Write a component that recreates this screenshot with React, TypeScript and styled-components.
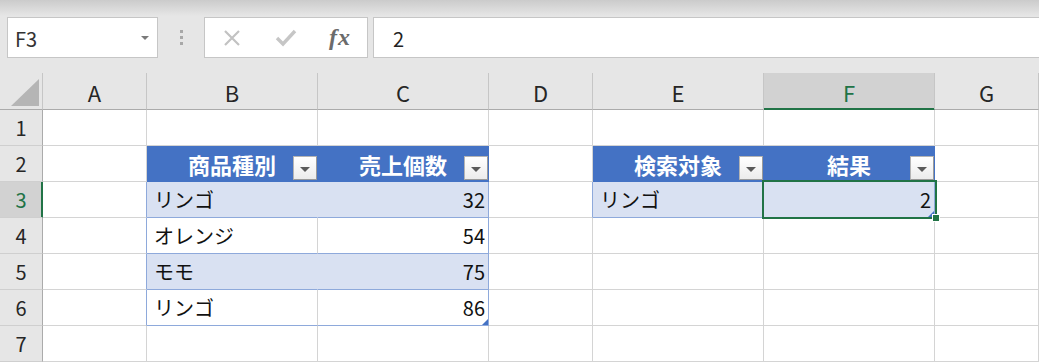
import React from "react";
import styled, { createGlobalStyle } from "styled-components";

const GRID = "#d4d4d4";
const TABLE_LINE = "#8ea9db";
const HEAD_BG = "#4472c4";
const BAND_BG = "#d9e1f2";
const EXCEL_GREEN = "#217346";

const GlobalStyle = createGlobalStyle`
  html, body {
    margin: 0;
    padding: 0;
    background: #ffffff;
  }
  body {
    font-family: "Noto Sans CJK JP", "Noto Sans", sans-serif;
    overflow: hidden;
  }
`;

const Window = styled.div`
  width: 1039px;
  height: 362px;
  overflow: hidden;
  background: #ffffff;
`;

const FormulaBar = styled.div`
  height: 73px;
  box-sizing: border-box;
  padding: 17px 0 0 7px;
  display: flex;
  align-items: flex-start;
  background: linear-gradient(to bottom, #cbcbcb 0px, #e6e6e6 16px);
`;

const NameBox = styled.div`
  box-sizing: border-box;
  width: 151px;
  height: 41px;
  background: #ffffff;
  border: 1px solid #c6c6c6;
  display: flex;
  align-items: center;
  justify-content: space-between;
  padding: 3px 8px 0 7px;
  font-size: 20px;
  line-height: 1;
  color: #333333;
`;

const DropArrow = styled.span`
  width: 0;
  height: 0;
  margin-top: -3px;
  border-left: 4px solid transparent;
  border-right: 4px solid transparent;
  border-top: 4px solid #7a7a7a;
`;

const Grip = styled.div`
  width: 46px;
  height: 41px;
  display: flex;
  flex-direction: column;
  align-items: center;
  justify-content: center;
  gap: 3px;
`;

const GripDot = styled.span`
  width: 3px;
  height: 3px;
  background: #a8a8a8;
`;

const ButtonGroup = styled.div`
  box-sizing: border-box;
  height: 41px;
  background: #ffffff;
  border: 1px solid #c6c6c6;
  display: flex;
  align-items: center;
`;

const ToolButton = styled.div`
  width: 54px;
  height: 39px;
  display: flex;
  align-items: center;
  justify-content: center;
`;

const FxLabel = styled.span`
  font-family: "Liberation Serif", "DejaVu Serif", serif;
  font-style: italic;
  font-weight: bold;
  font-size: 24px;
  color: #6b6b6b;
  letter-spacing: 1px;
`;

const FormulaInput = styled.div`
  box-sizing: border-box;
  flex: 1;
  height: 41px;
  margin-left: 5px;
  background: #ffffff;
  border: 1px solid #c6c6c6;
  border-right: none;
  display: flex;
  align-items: center;
  padding: 2px 0 0 19px;
  font-size: 20px;
  line-height: 1;
  color: #222222;
`;

const Sheet = styled.div`
  display: grid;
  grid-template-columns: 43px 104px 171px 171px 104px 171px 171px 104px;
  grid-template-rows: 37px repeat(7, 36px);
`;

const Corner = styled.div`
  box-sizing: border-box;
  background: #e6e6e6;
  border-right: 1px solid #c6c6c6;
  border-bottom: 1px solid #ababab;
  display: flex;
  align-items: flex-end;
  justify-content: flex-end;
  padding: 0 3px 3px 0;
`;

const CornerMark = styled.span`
  width: 28px;
  height: 27px;
  background: #b5b5b5;
  clip-path: polygon(100% 0, 100% 100%, 0 100%);
`;

const ColHead = styled.div<{ $selected?: boolean }>`
  box-sizing: border-box;
  background: ${(p) => (p.$selected ? "#d2d2d2" : "#e6e6e6")};
  border-right: 1px solid #c6c6c6;
  border-bottom: 1px solid ${(p) => (p.$selected ? EXCEL_GREEN : "#ababab")};
  box-shadow: ${(p) => (p.$selected ? `inset 0 -1px 0 ${EXCEL_GREEN}` : "none")};
  display: flex;
  align-items: center;
  justify-content: center;
  padding-top: 1px;
  font-size: 22px;
  line-height: 1;
  color: ${(p) => (p.$selected ? EXCEL_GREEN : "#262626")};
`;

const RowHead = styled.div<{ $selected?: boolean }>`
  box-sizing: border-box;
  background: ${(p) => (p.$selected ? "#d2d2d2" : "#e6e6e6")};
  border-right: 1px solid ${(p) => (p.$selected ? EXCEL_GREEN : "#ababab")};
  border-bottom: 1px solid #cfcfcf;
  box-shadow: ${(p) => (p.$selected ? `inset -1px 0 0 ${EXCEL_GREEN}` : "none")};
  display: flex;
  align-items: center;
  justify-content: center;
  font-size: 20px;
  line-height: 1;
  color: ${(p) => (p.$selected ? EXCEL_GREEN : "#262626")};
`;

const Cell = styled.div<{
  $bg: string;
  $right: string;
  $bottom: string;
  $head?: boolean;
  $numeric?: boolean;
}>`
  position: relative;
  box-sizing: border-box;
  background: ${(p) => p.$bg};
  border-right: 1px solid ${(p) => p.$right};
  border-bottom: 1px solid ${(p) => p.$bottom};
  display: flex;
  align-items: center;
  justify-content: ${(p) => (p.$head ? "center" : p.$numeric ? "flex-end" : "flex-start")};
  padding: ${(p) => (p.$head ? "0" : "1px 3px 0 7px")};
  font-size: ${(p) => (p.$head ? "22px" : "20px")};
  line-height: 1;
  font-weight: ${(p) => (p.$head ? 700 : 400)};
  color: ${(p) => (p.$head ? "#ffffff" : "#111111")};
  white-space: nowrap;
`;

const FilterButton = styled.span`
  position: absolute;
  right: 0;
  bottom: 1px;
  box-sizing: border-box;
  width: 24px;
  height: 24px;
  background: linear-gradient(to bottom, #ffffff, #ececec);
  border: 1px solid #b4b4b4;
  border-right-color: #9a9a9a;
  border-bottom-color: #9a9a9a;
  display: flex;
  align-items: center;
  justify-content: center;
  padding-top: 2px;
`;

const FilterArrow = styled.span`
  width: 0;
  height: 0;
  border-left: 5px solid transparent;
  border-right: 5px solid transparent;
  border-top: 5px solid #5a5a5a;
`;

const ResizeHandle = styled.span`
  position: absolute;
  right: 0;
  bottom: 0;
  width: 6px;
  height: 6px;
  background: ${HEAD_BG};
  clip-path: polygon(100% 0, 100% 100%, 0 100%);
`;

const Selection = styled.span`
  position: absolute;
  top: -2px;
  left: -2px;
  right: -3px;
  bottom: -2px;
  border: 2px solid ${EXCEL_GREEN};
  z-index: 2;
  pointer-events: none;
`;

const FillHandle = styled.span`
  position: absolute;
  right: -5px;
  bottom: -5px;
  width: 6px;
  height: 6px;
  background: ${EXCEL_GREEN};
  border: 1px solid #ffffff;
`;

const COLS = ["A", "B", "C", "D", "E", "F", "G"];
const ROWS = [1, 2, 3, 4, 5, 6, 7];

interface TableRange {
  c0: number;
  c1: number;
  r0: number;
  r1: number;
}

const TABLES: TableRange[] = [
  { c0: 1, c1: 2, r0: 2, r1: 6 },
  { c0: 4, c1: 5, r0: 2, r1: 3 },
];

const VALUES: Record<string, string | number> = {
  B2: "商品種別",
  C2: "売上個数",
  B3: "リンゴ",
  C3: 32,
  B4: "オレンジ",
  C4: 54,
  B5: "モモ",
  C5: 75,
  B6: "リンゴ",
  C6: 86,
  E2: "検索対象",
  F2: "結果",
  E3: "リンゴ",
  F3: 2,
};

const ACTIVE = { col: 5, row: 3 };

function findTable(c: number, r: number) {
  return TABLES.find((t) => c >= t.c0 && c <= t.c1 && r >= t.r0 && r <= t.r1);
}

function cellLook(c: number, r: number) {
  const t = findTable(c, r);
  if (t && r === t.r0) {
    return { bg: HEAD_BG, right: HEAD_BG, bottom: HEAD_BG, head: true, table: t };
  }
  if (t) {
    const band = (r - t.r0) % 2 === 1;
    const bg = band ? BAND_BG : "#ffffff";
    const right = c === t.c1 ? TABLE_LINE : band ? BAND_BG : GRID;
    return { bg, right, bottom: TABLE_LINE, head: false, table: t };
  }
  const next = findTable(c + 1, r);
  const right = next && next.c0 === c + 1 && r > next.r0 ? TABLE_LINE : GRID;
  return { bg: "#ffffff", right, bottom: GRID, head: false, table: undefined };
}

function XIcon() {
  return (
    <svg width="20" height="20" viewBox="0 0 20 20">
      <path d="M3 3 L17 17 M17 3 L3 17" stroke="#c2c2c2" strokeWidth="2.2" fill="none" />
    </svg>
  );
}

function CheckIcon() {
  return (
    <svg width="22" height="20" viewBox="0 0 22 20">
      <path d="M2 10 L8 16 L20 3" stroke="#c6c6c6" strokeWidth="3.4" fill="none" />
    </svg>
  );
}

function App() {
  return (
    <Window>
      <GlobalStyle />
      <FormulaBar>
        <NameBox>
          F3
          <DropArrow />
        </NameBox>
        <Grip>
          <GripDot />
          <GripDot />
          <GripDot />
        </Grip>
        <ButtonGroup>
          <ToolButton>
            <XIcon />
          </ToolButton>
          <ToolButton>
            <CheckIcon />
          </ToolButton>
          <ToolButton>
            <FxLabel>fx</FxLabel>
          </ToolButton>
        </ButtonGroup>
        <FormulaInput>2</FormulaInput>
      </FormulaBar>

      <Sheet>
        <Corner>
          <CornerMark />
        </Corner>
        {COLS.map((name, c) => (
          <ColHead key={name} $selected={c === ACTIVE.col}>
            {name}
          </ColHead>
        ))}
        {ROWS.map((r) => (
          <React.Fragment key={r}>
            <RowHead $selected={r === ACTIVE.row}>{r}</RowHead>
            {COLS.map((name, c) => {
              const look = cellLook(c, r);
              const value = VALUES[`${name}${r}`];
              const isLast = look.table && c === look.table.c1 && r === look.table.r1;
              const isActive = c === ACTIVE.col && r === ACTIVE.row;
              return (
                <Cell
                  key={name}
                  $bg={look.bg}
                  $right={look.right}
                  $bottom={look.bottom}
                  $head={look.head}
                  $numeric={typeof value === "number"}
                >
                  {value}
                  {look.head && (
                    <FilterButton>
                      <FilterArrow />
                    </FilterButton>
                  )}
                  {isLast && <ResizeHandle />}
                  {isActive && (
                    <Selection>
                      <FillHandle />
                    </Selection>
                  )}
                </Cell>
              );
            })}
          </React.Fragment>
        ))}
      </Sheet>
    </Window>
  );
}

export default App;
